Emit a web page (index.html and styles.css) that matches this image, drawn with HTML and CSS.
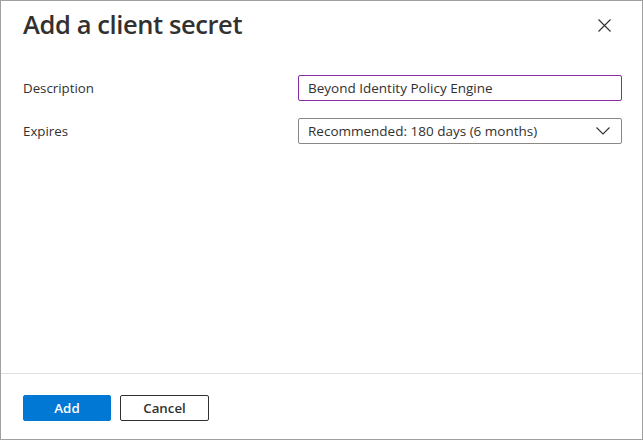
FILE: index.html
```html
<!DOCTYPE html>
<html>
<head>
<meta charset="utf-8">
<link rel="stylesheet" href="styles.css">
</head>
<body>
<div class="panel">
  <div class="header">
    <h1 class="title">Add a client secret</h1>
    <button class="close" aria-label="Close">
      <svg width="13" height="13" viewBox="0 0 13 13"><path d="M0.5 0.5 L12.5 12.5 M12.5 0.5 L0.5 12.5" stroke="#323130" stroke-width="1.1" fill="none"/></svg>
    </button>
  </div>
  <div class="body">
    <div class="row">
      <label class="label">Description</label>
      <div class="field input focused">Beyond Identity Policy Engine</div>
    </div>
    <div class="row">
      <label class="label">Expires</label>
      <div class="field select">
        <span>Recommended: 180 days (6 months)</span>
        <svg class="chev" width="14" height="8" viewBox="0 0 14 8"><path d="M0.5 0.5 L7 7 L13.5 0.5" stroke="#323130" stroke-width="1.1" fill="none"/></svg>
      </div>
    </div>
  </div>
  <div class="footer">
    <button class="btn primary">Add</button>
    <button class="btn secondary">Cancel</button>
  </div>
</div>
</body>
</html>
```
FILE: styles.css
```css
html, body {
  margin: 0;
  padding: 0;
  background: #fff;
}
.panel {
  box-sizing: border-box;
  width: 643px;
  height: 440px;
  border: 1px solid #a0a0a0;
  display: flex;
  flex-direction: column;
  font-family: "Open Sans", "Noto Sans", sans-serif;
  color: #323130;
}
.header {
  display: flex;
  justify-content: space-between;
  align-items: flex-start;
  padding: 5px 31px 0 22px;
  height: 46px;
}
.title {
  margin: 0;
  font-size: 25.5px;
  font-weight: 600;
  letter-spacing: -0.4px;
  line-height: 36px;
}
.close {
  border: 0;
  background: none;
  padding: 0;
  margin-top: 13px;
  width: 13px;
  height: 13px;
  display: flex;
}
.body {
  flex: 1;
  display: flex;
  flex-direction: column;
  gap: 17px;
  padding: 23px 20px 0 22px;
}
.row {
  display: flex;
  align-items: center;
  justify-content: space-between;
}
.label {
  font-size: 13.3px;
}
.field {
  box-sizing: border-box;
  width: 324px;
  height: 26px;
  border: 1px solid #8a8886;
  border-radius: 2px;
  font-size: 13.5px;
  display: flex;
  align-items: center;
  padding: 0 10px 0 9px;
}
.input.focused {
  border-color: #8a2da5;
}
.select {
  justify-content: space-between;
}
.chev {
  margin-right: 1px;
}
.footer {
  border-top: 1px solid #e1dfdd;
  height: 66px;
  display: flex;
  align-items: center;
  gap: 9px;
  padding: 0 22px 0 22px;
  box-sizing: border-box;
}
.btn {
  box-sizing: border-box;
  height: 26px;
  border-radius: 2px;
  font-family: "Open Sans", "Noto Sans", sans-serif;
  font-size: 13.3px;
  font-weight: 600;
  padding: 0;
  margin-top: 3px;
}
.primary {
  width: 88px;
  background: #0078d4;
  border: 1px solid #0078d4;
  color: #fff;
}
.secondary {
  width: 89px;
  background: #fff;
  border: 1px solid #323130;
  color: #323130;
}
```
